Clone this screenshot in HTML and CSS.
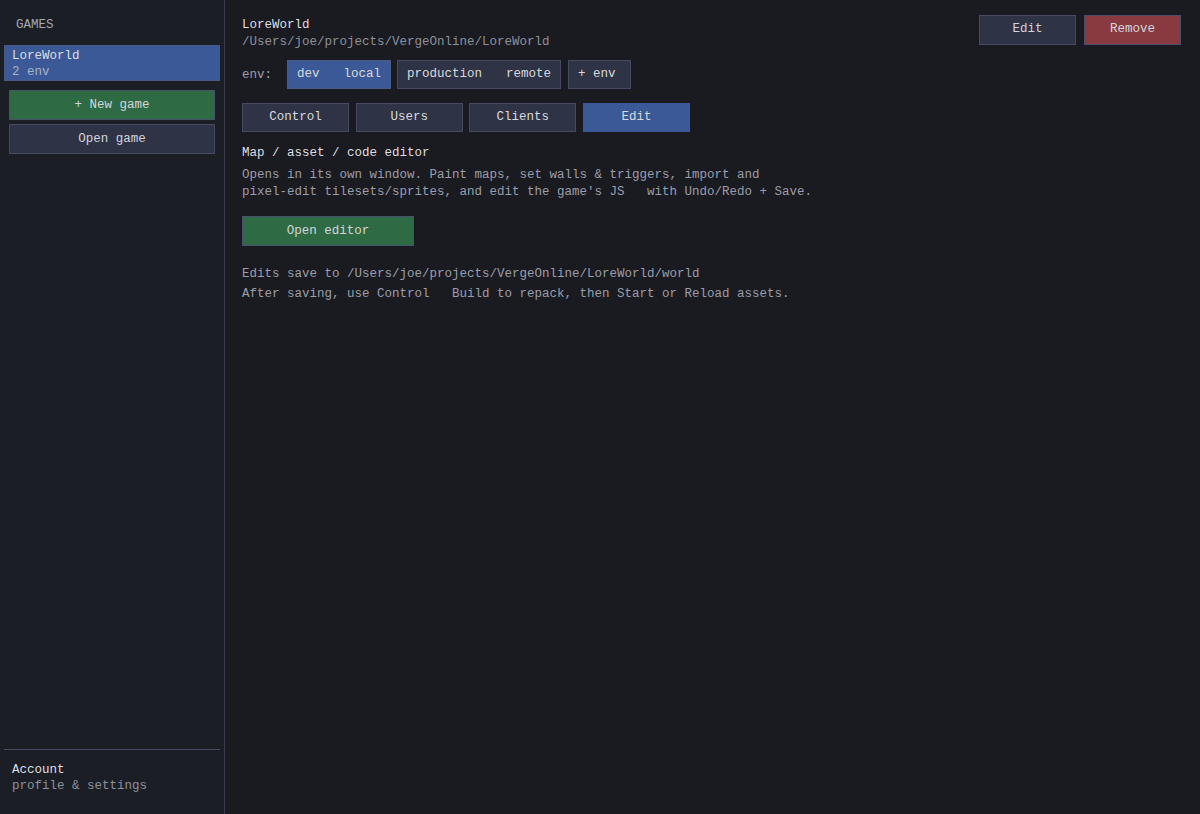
FILE: index.html
```html
<!DOCTYPE html>
<html lang="en">
<head>
  <meta charset="UTF-8">
  <title>Verge Online - Games</title>
  <link rel="stylesheet" href="styles.css">
</head>
<body>
<div id="app">
  <aside id="sidebar">
    <div class="side-heading">GAMES</div>
    <div class="game-item selected">
      <div class="game-name">LoreWorld</div>
      <div class="game-sub">2 env</div>
    </div>
    <div class="side-actions">
      <button class="btn green">+ New game</button>
      <button class="btn">Open game</button>
    </div>
    <div class="account">
      <div class="game-name">Account</div>
      <div class="game-sub">profile &amp; settings</div>
    </div>
  </aside>

  <main id="main">
    <div class="header">
      <div>
        <div class="title">LoreWorld</div>
        <div class="path">/Users/joe/projects/VergeOnline/LoreWorld</div>
      </div>
      <div class="header-actions">
        <button class="btn small">Edit</button>
        <button class="btn small red">Remove</button>
      </div>
    </div>

    <div class="env-row">
      <span class="env-label">env:</span>
      <button class="chip active"><span>dev</span><span>local</span></button>
      <button class="chip"><span>production</span><span>remote</span></button>
      <button class="chip add">+ env</button>
    </div>

    <div class="tabs">
      <button class="tab">Control</button>
      <button class="tab">Users</button>
      <button class="tab">Clients</button>
      <button class="tab active">Edit</button>
    </div>

    <div class="section-title">Map / asset / code editor</div>
    <p class="desc">Opens in its own window. Paint maps, set walls &amp; triggers, import and<br>pixel-edit tilesets/sprites, and edit the game's JS &nbsp; with Undo/Redo + Save.</p>

    <button class="btn green editor-btn">Open editor</button>

    <div class="notes">
      <div>Edits save to /Users/joe/projects/VergeOnline/LoreWorld/world</div>
      <div>After saving, use Control &nbsp; Build to repack, then Start or Reload assets.</div>
    </div>
  </main>
</div>
</body>
</html>
```

FILE: styles.css
```css
* {
  box-sizing: border-box;
}
body {
  margin: 0;
  background: #1a1b20;
  color: #dadade;
  font-family: 'Liberation Mono', 'DejaVu Sans Mono', monospace;
  font-size: 12.5px;
  line-height: 16px;
}
button {
  font-family: inherit;
  font-size: inherit;
  color: inherit;
  cursor: pointer;
  line-height: 16px;
}
#app {
  display: flex;
  height: 814px;
}
#sidebar {
  width: 225px;
  flex-shrink: 0;
  background: #1c1e26;
  border-right: 1px solid #3a3d50;
  padding: 4px 4px 20px 4px;
  display: flex;
  flex-direction: column;
}
.side-heading {
  color: #a3a6b3;
  padding: 13px 12px 0;
  margin-bottom: 12px;
}
.game-item {
  padding: 2px 7px 0;
  border: 1px solid #4b5a85;
}
.game-item.selected {
  background: #3b5996;
}
.game-name {
  color: #dedee3;
}
.game-sub {
  color: #8d909c;
}
.game-item.selected .game-sub {
  color: #a7b1cb;
}
.side-actions {
  display: flex;
  flex-direction: column;
  gap: 4px;
  padding: 9px 5px 0;
}
.btn {
  height: 30px;
  background: #2f3346;
  border: 1px solid #454a62;
  color: #d4d5dc;
  padding: 0 10px 1px;
}
.btn.green {
  background: #2e6b44;
  border-color: #45526a;
}
.btn.red {
  background: #883a40;
  border-color: #4a4e66;
}
.btn.small {
  width: 97px;
  padding-bottom: 2px;
}
.account {
  margin-top: auto;
  border-top: 1px solid #474a63;
  padding: 12px 8px 0;
}
#main {
  flex: 1;
  padding: 17px 19px 0 17px;
}
.header {
  display: flex;
  justify-content: space-between;
  align-items: flex-start;
}
.title {
  color: #dedee3;
}
.path {
  color: #8d909c;
  margin-top: 1px;
}
.header-actions {
  display: flex;
  gap: 8px;
  margin-top: -2px;
}
.env-row {
  display: flex;
  align-items: center;
  gap: 6px;
  margin-top: 10px;
}
.env-label {
  color: #9a9dab;
  width: 39px;
}
.chip {
  height: 29px;
  background: #2f3346;
  border: 1px solid #454a62;
  padding: 0 9px 2px;
  display: flex;
  align-items: center;
  gap: 24px;
}
.chip.active {
  background: #3b5996;
  border-color: #4b5a85;
}
.chip.add {
  margin-left: 1px;
  padding: 0 14px 2px 9px;
}
.tabs {
  display: flex;
  gap: 6.67px;
  margin-top: 14px;
}
.tab {
  width: 107px;
  height: 29px;
  background: #2f3346;
  border: 1px solid #454a62;
  padding-bottom: 2px;
}
.tab.active {
  background: #3b5996;
  border-color: #3b5996;
}
.section-title {
  color: #dedee3;
  margin-top: 13px;
}
.desc {
  color: #9a9dab;
  line-height: 17px;
  margin: 6px 0 0;
}
.editor-btn {
  display: block;
  width: 172px;
  margin-top: 15px;
}
.notes {
  color: #9a9dab;
  line-height: 20px;
  margin-top: 18px;
}
```
